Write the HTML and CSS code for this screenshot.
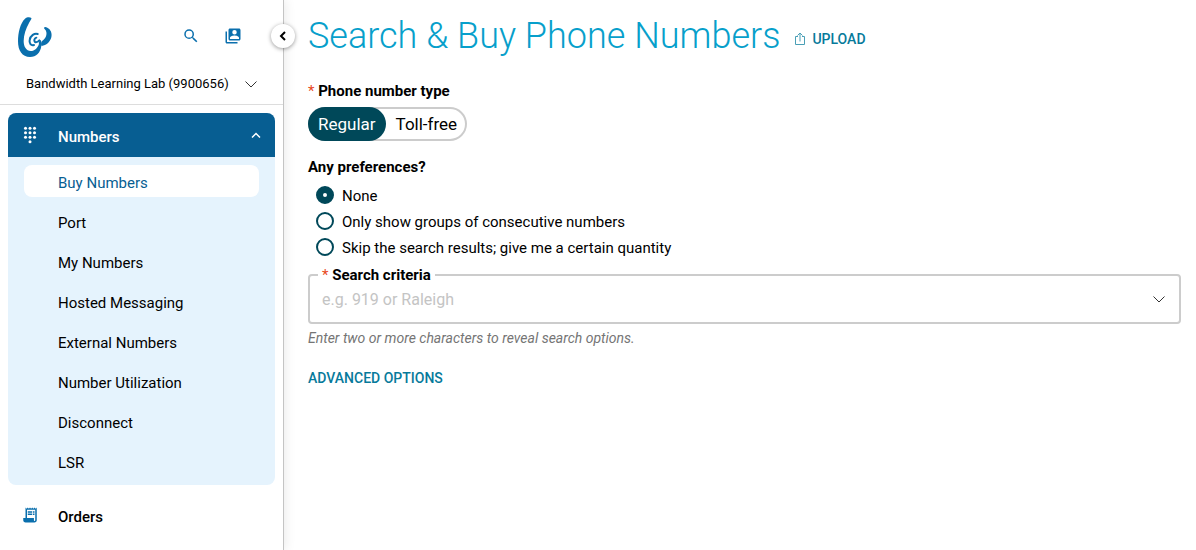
FILE: index.html
```html
<!DOCTYPE html>
<html lang="en">
<head>
    <meta charset="UTF-8">
    <meta name="viewport" content="width=device-width, initial-scale=1.0">
    <title>Search &amp; Buy Phone Numbers</title>
    <link rel="stylesheet" href="styles.css">
</head>
<body>

    <aside class="sidebar">
        <button type="button" class="collapse" aria-label="Collapse menu">
            <svg width="8" height="10" viewBox="0 0 8 10"><path d="M6 1 2 5l4 4" fill="none" stroke="#000" stroke-width="2"/></svg>
        </button>

        <header class="sidebar-header">
            <div class="brand-row">
                <a href="#" class="logo" aria-label="Home">
                    <svg width="36" height="42" viewBox="22 18 108 126">
                        <path fill="#0a6fad" d="M46 26C52 21 61 21 65 24 67 27 62 31 58 39 49 56 42 75 42 93 42 110 50 123 63 123 75 123 85 113 88 101 86 98 88 94 92 90 95 92 97 99 95 108 92 128 80 141 61 141 37 141 25 122 25 94 25 68 32 39 46 26Z"/>
                        <path fill="#0a6fad" d="M103 53C105 50 109 51 113 53 123 58 128 69 125 82 121 97 110 106 96 108 93 104 94 97 98 92 107 87 112 76 110 66 109 59 103 57 103 53Z"/>
                        <path fill="none" stroke="#0a6fad" stroke-width="6" stroke-linecap="round" d="M84 72C75 68 62 77 60 90 58 100 64 108 73 105"/>
                        <path fill="none" stroke="#0a6fad" stroke-width="6" stroke-linecap="round" d="M80 83C74 85 72 92 76 96 81 98 85 95 89 91"/>
                    </svg>
                </a>
                <button type="button" class="icon-button" aria-label="Search">
                    <svg width="18" height="18" viewBox="0 0 24 24"><path fill="#0a6fad" d="M15.5 14h-.79l-.28-.27A6.47 6.47 0 0 0 16 9.5 6.5 6.5 0 1 0 9.5 16c1.61 0 3.09-.59 4.23-1.57l.27.28v.79l5 4.99L20.49 19l-4.99-5zm-6 0a4.5 4.5 0 1 1 0-9 4.5 4.5 0 0 1 0 9z"/></svg>
                </button>
                <button type="button" class="icon-button" aria-label="Contacts">
                    <svg width="18" height="18" viewBox="0 0 24 24"><path fill="#0a6fad" d="M4 6H2v14c0 1.1.9 2 2 2h14v-2H4V6zm16-4H8c-1.1 0-2 .9-2 2v12c0 1.1.9 2 2 2h12c1.1 0 2-.9 2-2V4c0-1.1-.9-2-2-2zm-6 2a3 3 0 1 1 0 6 3 3 0 0 1 0-6zm6 12H8v-1.5c0-2 4-3.1 6-3.1s6 1.1 6 3.1V16z"/></svg>
                </button>
            </div>
            <button type="button" class="account">
                <span>Bandwidth Learning Lab (9900656)</span>
                <svg width="12" height="7" viewBox="0 0 12 7"><path d="M.5.5 6 6 11.5.5" fill="none" stroke="#333"/></svg>
            </button>
        </header>

        <nav class="nav">
            <div class="nav-group">
                <button type="button" class="nav-head open" aria-expanded="true">
                    <svg class="nav-icon" width="18" height="18" viewBox="0 0 24 24" fill="#fff">
                        <circle cx="6" cy="3" r="2"/><circle cx="12" cy="3" r="2"/><circle cx="18" cy="3" r="2"/>
                        <circle cx="6" cy="9" r="2"/><circle cx="12" cy="9" r="2"/><circle cx="18" cy="9" r="2"/>
                        <circle cx="6" cy="15" r="2"/><circle cx="12" cy="15" r="2"/><circle cx="18" cy="15" r="2"/>
                        <circle cx="12" cy="21" r="2"/>
                    </svg>
                    <span class="nav-text">Numbers</span>
                    <svg width="10" height="6" viewBox="0 0 10 6"><path d="M1 5.5 5 1.5l4 4" fill="none" stroke="#fff" stroke-width="1.5"/></svg>
                </button>
                <ul class="subnav">
                    <li><a href="#" class="active">Buy Numbers</a></li>
                    <li><a href="#">Port</a></li>
                    <li><a href="#">My Numbers</a></li>
                    <li><a href="#">Hosted Messaging</a></li>
                    <li><a href="#">External Numbers</a></li>
                    <li><a href="#">Number Utilization</a></li>
                    <li><a href="#">Disconnect</a></li>
                    <li><a href="#">LSR</a></li>
                </ul>
            </div>
            <button type="button" class="nav-head" aria-expanded="false">
                <svg class="nav-icon" width="18" height="18" viewBox="0 0 24 24"><path fill="#0a6fad" d="M19.5 3.5 18 2l-1.5 1.5L15 2l-1.5 1.5L12 2l-1.5 1.5L9 2 7.5 3.5 6 2v14H3v3c0 1.66 1.34 3 3 3h12c1.66 0 3-1.34 3-3V2l-1.5 1.5zM19 19c0 .55-.45 1-1 1s-1-.45-1-1v-3H8V5h11v14zM9 7h6v2H9zm7 0h2v2h-2zM9 10h6v2H9zm7 0h2v2h-2z"/><path fill="#0a6fad" d="M4 16h13v5H6l-2-1z"/></svg>
                <span class="nav-text">Orders</span>
            </button>
        </nav>
    </aside>

    <main class="content">
        <div class="title-row">
            <h1>Search &amp; Buy Phone Numbers</h1>
            <a href="#" class="upload">
                <svg width="12" height="14" viewBox="0 0 12 14"><path d="M4 4.500H1.500v8h9v-8H8M6 9.500V1M3.500 3.500 6 1l2.500 2.500" fill="none" stroke="#4a9fb6"/></svg>
                Upload
            </a>
        </div>

        <form class="search-form">
            <h2 id="type-label"><span class="required">*</span> Phone number type</h2>
            <div class="toggle" role="group" aria-labelledby="type-label">
                <button type="button" class="selected" aria-pressed="true">Regular</button>
                <button type="button" aria-pressed="false">Toll-free</button>
            </div>

            <h2 class="preferences-label" id="pref-label">Any preferences?</h2>
            <div class="preferences" role="radiogroup" aria-labelledby="pref-label">
                <label><input type="radio" name="preference" checked> <span>None</span></label>
                <label><input type="radio" name="preference"> <span>Only show groups of consecutive numbers</span></label>
                <label><input type="radio" name="preference"> <span>Skip the search results; give me a certain quantity</span></label>
            </div>

            <fieldset class="criteria">
                <legend><label for="criteria"><span class="required">*</span> Search criteria</label></legend>
                <div class="criteria-row">
                    <input type="text" id="criteria" placeholder="e.g. 919 or Raleigh">
                    <svg width="12" height="7" viewBox="0 0 12 7"><path d="M.5.5 6 6 11.5.5" fill="none" stroke="#333"/></svg>
                </div>
            </fieldset>
            <p class="help">Enter two or more characters to reveal search options.</p>
            <button type="button" class="advanced">Advanced options</button>
        </form>
    </main>

</body>
</html>
```
FILE: styles.css
```css
* {
    box-sizing: border-box;
}

body {
    margin: 0;
    min-height: 100vh;
    display: flex;
    font-family: Roboto, "Liberation Sans", sans-serif;
    font-size: 15px;
    line-height: 20px;
    color: #000;
    background: #fff;
}

button, input {
    font: inherit;
    color: inherit;
}

button {
    border: 0;
    padding: 0;
    background: none;
    cursor: pointer;
}

a {
    color: inherit;
    text-decoration: none;
}

svg {
    display: block;
    flex: none;
}

/* Sidebar */
.sidebar {
    position: relative;
    flex: 0 0 284px;
    border-right: 1px solid #c4c4c4;
    box-shadow: 2px 0 10px rgba(0, 0, 0, 0.08);
}

.collapse {
    position: absolute;
    top: 24px;
    right: -12px;
    width: 24px;
    height: 24px;
    display: flex;
    align-items: center;
    justify-content: center;
    border-radius: 50%;
    background: #fff;
    box-shadow: 0 1px 4px rgba(0, 0, 0, 0.4);
}

.sidebar-header {
    padding: 16px 26px 10px 17px;
    border-bottom: 1px solid #ddd;
}

.brand-row {
    display: flex;
    align-items: flex-start;
    gap: 24px;
    padding-right: 15px;
}

.logo {
    margin-right: auto;
}

.icon-button {
    padding-top: 11px;
}

.account {
    width: 100%;
    display: flex;
    align-items: center;
    justify-content: space-between;
    margin-top: 16px;
    padding-left: 9px;
    font-size: 13px;
}

.nav {
    padding: 8px;
}

.nav-group {
    margin-bottom: 8px;
    border-radius: 8px;
    overflow: hidden;
    background: #e5f3fd;
}

.nav-head {
    width: 100%;
    height: 44px;
    display: flex;
    align-items: center;
    padding: 0 14px 0 13px;
    font-weight: 500;
    text-align: left;
}

.nav-head.open {
    color: #fff;
    background: #075e92;
}

.nav-icon {
    margin-right: 19px;
}

.nav-text {
    flex: 1;
    padding-top: 4px;
}

.subnav {
    display: grid;
    gap: 8px;
    margin: 0;
    padding: 8px 16px;
    list-style: none;
}

.subnav a {
    display: block;
    padding: 8px 8px 4px 34px;
    border-radius: 8px;
}

.subnav .active {
    color: #075e92;
    background: #fff;
}

/* Main content */
.content {
    flex: 1;
    min-width: 0;
    padding: 12px 15px 24px 24px;
}

.title-row {
    display: flex;
    align-items: center;
    gap: 14px;
}

h1 {
    margin: 0;
    font-size: 36px;
    font-weight: 300;
    line-height: 48px;
    color: #079fcb;
}

.upload {
    display: flex;
    align-items: center;
    gap: 6px;
    padding-top: 6px;
    font-size: 14px;
    font-weight: 500;
    text-transform: uppercase;
    color: #077a9b;
}

h2 {
    margin: 0;
    font-size: 15px;
    font-weight: 700;
    line-height: 20px;
}

.search-form {
    margin-top: 21px;
}

.required {
    color: #e8471c;
    font-weight: 400;
}

.toggle {
    width: fit-content;
    display: flex;
    margin-top: 6px;
    border-radius: 17px;
    box-shadow: inset 0 0 0 2px #ccc;
}

.toggle button {
    height: 34px;
    padding: 0 10px;
    border-radius: 17px;
    font-size: 17px;
}

.toggle .selected {
    color: #fff;
    background: #004859;
}

.preferences-label {
    margin-top: 16px;
}

.preferences {
    padding: 5px 8px 0;
}

.preferences label {
    width: fit-content;
    height: 26px;
    display: flex;
    align-items: center;
    gap: 8px;
}

.preferences span {
    padding-top: 2px;
}

.preferences input {
    appearance: none;
    width: 18px;
    height: 18px;
    margin: 0;
    border: 2px solid #004859;
    border-radius: 50%;
}

.preferences input:checked {
    border-width: 7px;
}

.criteria {
    min-width: 0;
    margin: 5px 0 0;
    padding: 0 13px 0 8px;
    border: 2px solid #ccc;
    border-radius: 4px;
}

.criteria legend {
    padding: 0 4px;
    font-weight: 700;
}

.criteria-row {
    display: flex;
    align-items: center;
    padding: 0 1px 9px 4px;
}

.criteria input {
    flex: 1;
    min-width: 0;
    height: 28px;
    padding: 0;
    border: 0;
    outline: 0;
    font-size: 16px;
    background: none;
}

.criteria input::placeholder {
    color: #c4c4c4;
    opacity: 1;
}

.help {
    margin: 4px 0 20px;
    font-size: 14px;
    font-style: italic;
    color: #757575;
}

.advanced {
    display: block;
    font-size: 14px;
    font-weight: 500;
    text-transform: uppercase;
    color: #077a9b;
}
```
